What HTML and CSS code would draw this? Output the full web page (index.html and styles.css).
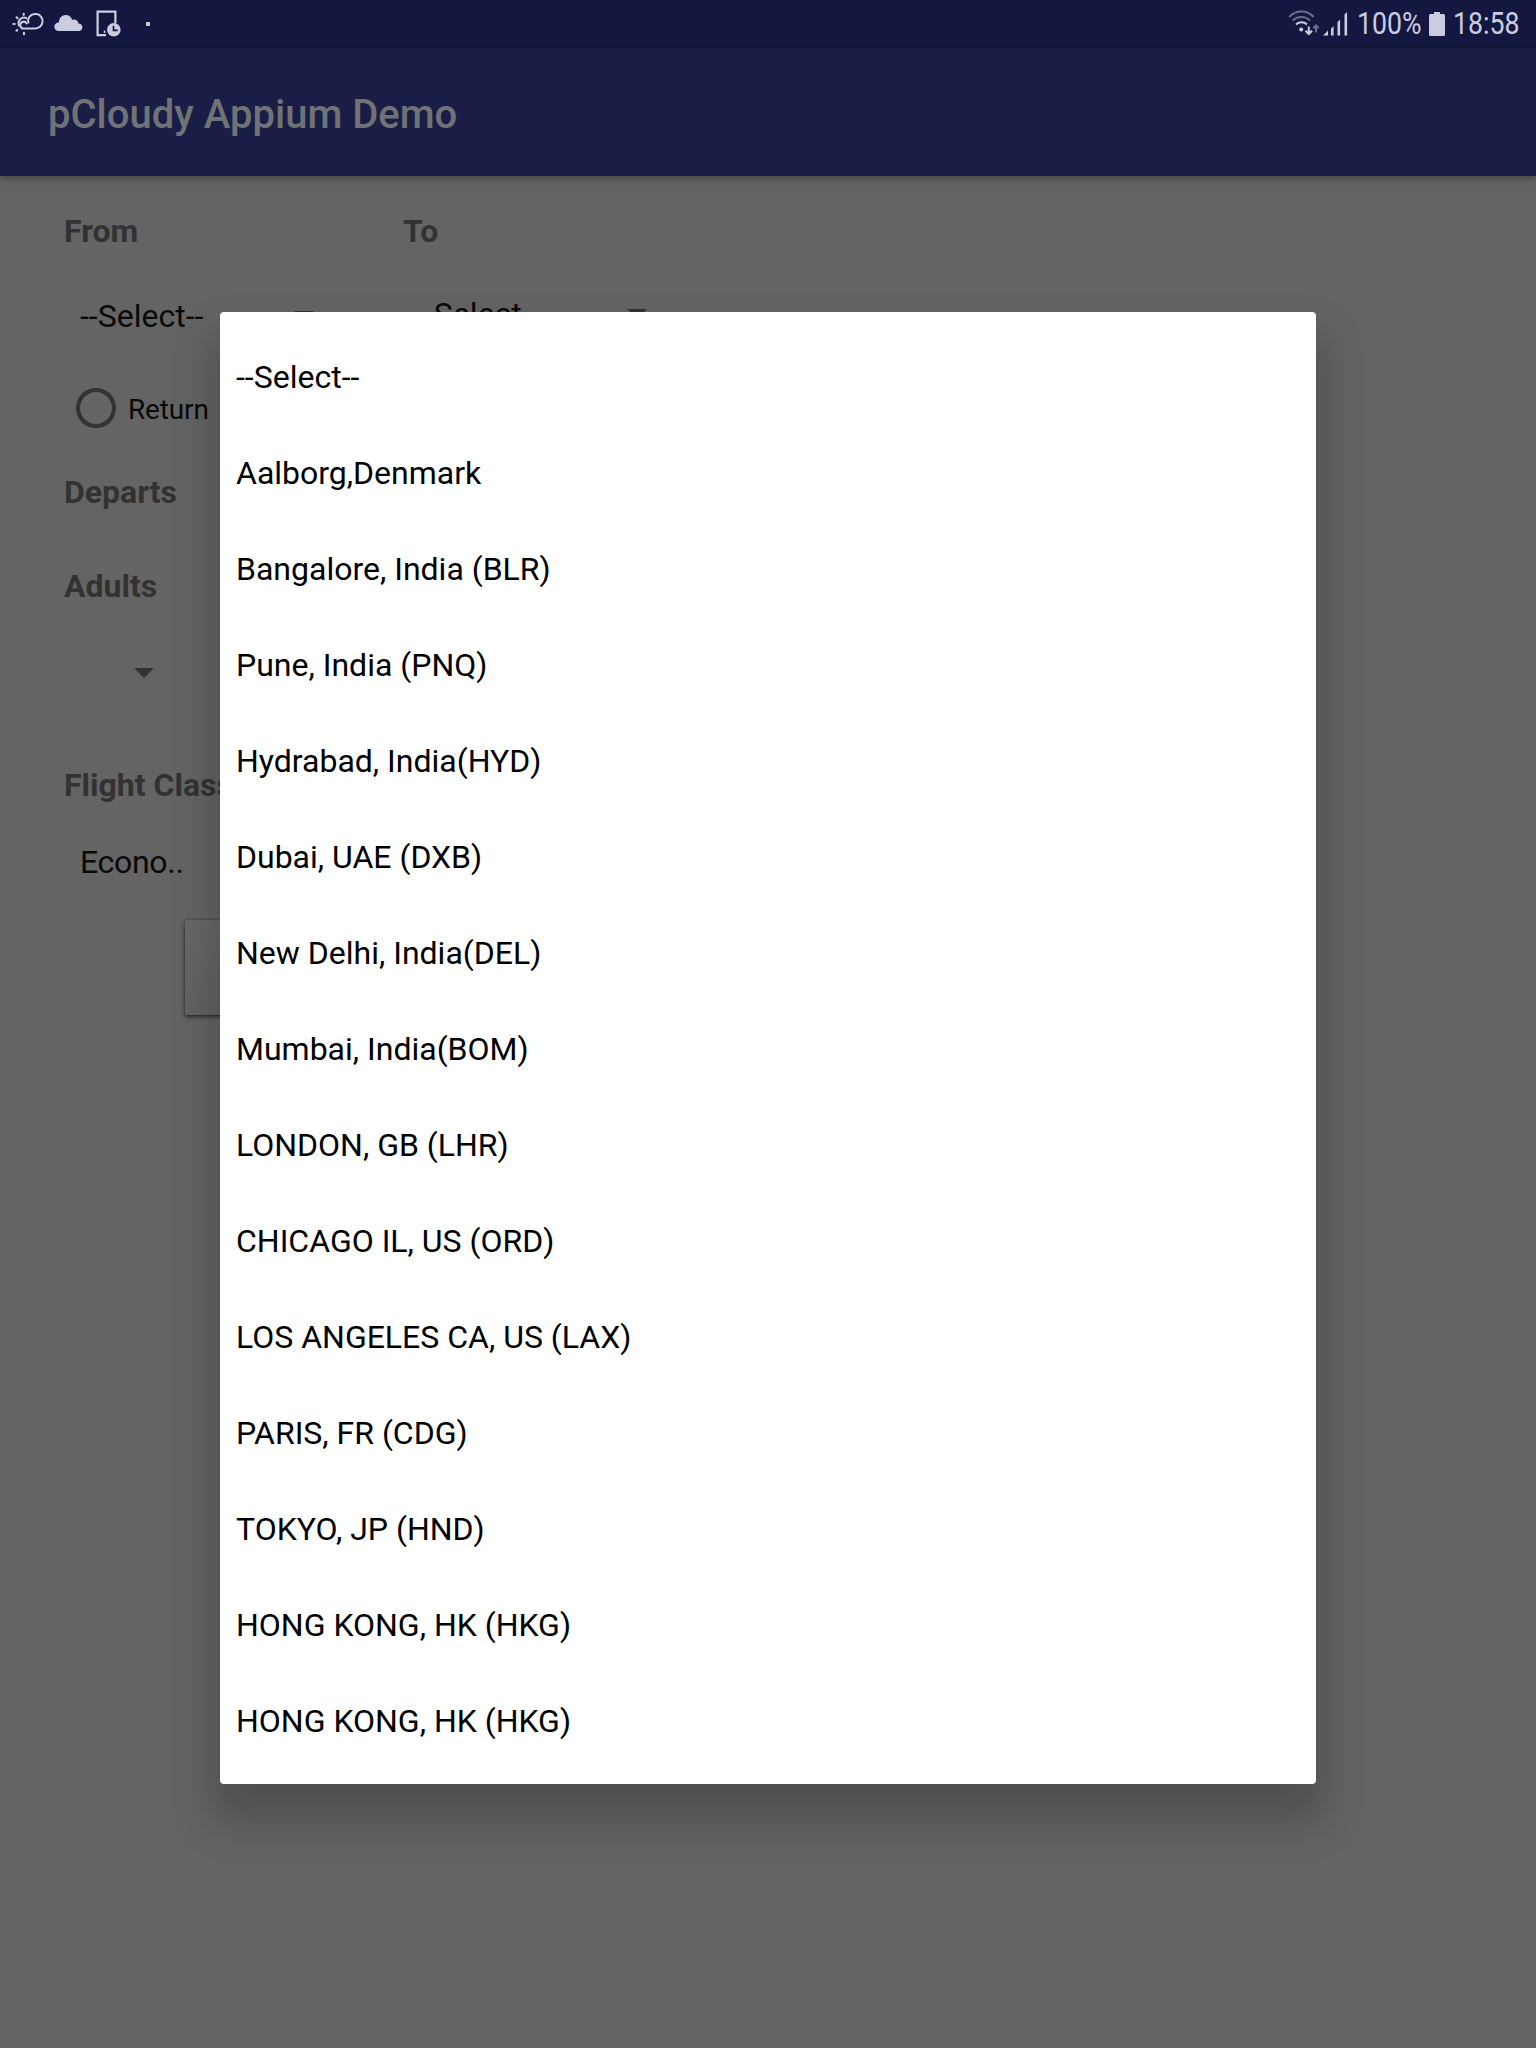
FILE: index.html
```html
<!DOCTYPE html>
<html lang="en">
<head>
<meta charset="utf-8">
<title>pCloudy Appium Demo</title>
<link rel="stylesheet" href="styles.css">
</head>
<body>
<div class="status-bar">
  <div class="notifications">
    <svg class="weather" width="32" height="26" viewBox="0 0 32 26" fill="none" stroke="currentColor" stroke-width="2" stroke-linecap="round">
      <path d="M14.6 13.400a3.400 3.400 0 1 0-2.600 5.100H23.300a7.300 7.300 0 1 0-7-9.500q-.6 1.800.2 3.500"/>
      <path d="M14.500 8.200A5.600 5.600 0 0 0 7 15.500"/>
      <path d="M4.600 7.300l.9.900M1.400 14h1.300M5.200 20l-.7.700M12 22.800v1.400M11.700 3.800v1" stroke-width="2.200"/>
    </svg>
    <svg class="cloud" width="29" height="18" viewBox="0 0 29 18" fill="currentColor">
      <path d="M5 17C2 17 .3 15 .3 12.7c0-2.500 2-4.300 4.500-4.300C5.200 4 8 1 11.500 1c3.200 0 5.800 1.900 6.700 4.900.5-.2 1-.3 1.600-.3 2.700 0 4.400 1.700 4.600 3.900 2.300.1 4 1.600 4 3.800 0 2.100-1.600 3.700-3.900 3.700z"/>
    </svg>
    <svg class="device" width="26" height="28" viewBox="0 0 26 28">
      <path d="M10 25.200H1.600V1.600h17.800V13" fill="none" stroke="currentColor" stroke-width="2.200"/>
      <path d="M8.500 20.500v2.500" stroke="currentColor" stroke-width="1.500"/>
      <circle cx="17.800" cy="19.800" r="6.800" fill="currentColor"/>
      <path d="M17.500 15.800v4.500h4.200" fill="none" stroke="#141840" stroke-width="1.700"/>
    </svg>
    <span class="more-dot"></span>
  </div>
  <div class="system">
    <svg class="wifi" width="33" height="26" viewBox="0 0 33 26" fill="none" stroke="currentColor" stroke-width="2">
      <path d="M1.200 7a16.500 16.500 0 0 1 24.500 0M4.700 10.600a12 12 0 0 1 17.300 0" opacity=".48"/>
      <path d="M8 14.500a8 8 0 0 1 11 0"/>
      <circle cx="13.200" cy="19.500" r="2" fill="currentColor" stroke="none"/>
      <path d="M20.800 16.500v7.500M17.500 20.800l3.300 3.200 3.300-3.200"/>
      <path d="M28 22.500v-7M25.300 18.200l2.700-2.700 2.700 2.700" opacity=".48"/>
    </svg>
    <svg class="signal" width="25" height="25" viewBox="0 0 25 25" fill="currentColor">
      <path d="M0 24.500l5-5v5zM8 24.500v-7l2.600-2.300v9.300zM14.500 24.500V11.200L17.100 8.600v15.900zM21.500 24.500V3.500L24.100.9v23.600z"/>
    </svg>
    <span class="percent">100%</span>
    <svg class="battery" width="16" height="24" viewBox="0 0 16 24" fill="currentColor">
      <path d="M5 0h6v2h3.500Q16 2 16 3.500v19q0 1.500-1.500 1.500h-13Q0 24 0 22.500v-19Q0 2 1.500 2H5z"/>
    </svg>
    <span class="clock">18:58</span>
  </div>
</div>
<header class="app-bar"><h1>pCloudy Appium Demo</h1></header>
<main class="form">
  <div class="route">
    <div class="field from">
      <span class="label">From</span>
      <div class="spinner"><span>--Select--</span><i class="caret"></i></div>
    </div>
    <div class="field to">
      <span class="label">To</span>
      <div class="spinner"><span>--Select--</span><i class="caret"></i></div>
    </div>
  </div>
  <div class="return"><i class="radio"></i><span>Return</span></div>
  <span class="label departs">Departs</span>
  <span class="label adults">Adults</span>
  <i class="caret adults-caret"></i>
  <span class="label flight">Flight Class</span>
  <span class="class-value">Econo..</span>
  <div class="search-button"></div>
</main>
<ul class="popup">
  <li>--Select--</li>
  <li>Aalborg,Denmark</li>
  <li>Bangalore, India (BLR)</li>
  <li>Pune, India (PNQ)</li>
  <li>Hydrabad, India(HYD)</li>
  <li>Dubai, UAE (DXB)</li>
  <li>New Delhi, India(DEL)</li>
  <li>Mumbai, India(BOM)</li>
  <li>LONDON, GB (LHR)</li>
  <li>CHICAGO IL, US (ORD)</li>
  <li>LOS ANGELES CA, US (LAX)</li>
  <li>PARIS, FR (CDG)</li>
  <li>TOKYO, JP (HND)</li>
  <li>HONG KONG, HK (HKG)</li>
  <li>HONG KONG, HK (HKG)</li>
</ul>
</body>
</html>
```
FILE: styles.css
```css
* { box-sizing: border-box; }
body {
  margin: 0;
  height: 2048px;
  position: relative;
  overflow: hidden;
  display: flex;
  flex-direction: column;
  background: #646464;
  color: #0a0a0a;
  font: 32px/38px Roboto, sans-serif;
}
.status-bar {
  height: 48px;
  flex: none;
  display: flex;
  justify-content: space-between;
  background: #141840;
  color: #cccce0;
}
.notifications, .system { display: flex; align-items: flex-start; }
.weather { margin: 10px 0 0 12px; }
.cloud { margin: 14px 0 0 10px; }
.device { margin: 10px 0 0 13px; }
.more-dot { width: 4px; height: 4px; margin: 22px 0 0 24px; border-radius: 1px; background: currentColor; }
.system { padding-right: 16px; font-size: 31px; line-height: 36px; }
.wifi { margin: 10px 2px 0 0; }
.signal { margin: 11px 9px 0 0; }
.battery { margin: 12px 8px 0 0; }
.percent, .clock { margin-top: 6px; white-space: nowrap; transform: scaleX(.86); transform-origin: left center; }
.percent { width: 64px; margin-right: 8px; }
.clock { width: 67px; }
.app-bar {
  height: 128px;
  flex: none;
  display: flex;
  align-items: center;
  padding: 6px 48px 0;
  background: #1a1e46;
  box-shadow: 0 2px 8px rgba(0, 0, 0, .35);
}
h1 { margin: 0; color: #707376; font-size: 40px; line-height: 48px; font-weight: 500; }
.form { display: flex; flex-direction: column; align-items: flex-start; padding: 36px 64px 0; }
.route { display: flex; height: 123px; }
.field { display: flex; flex-direction: column; }
.from { width: 339px; }
.to { width: 260px; }
.label { color: #323232; font-weight: 700; }
.spinner { display: flex; align-items: flex-start; justify-content: space-between; margin-top: 47px; padding-left: 16px; }
.from .spinner { padding-right: 89px; }
.to .spinner { margin-top: 45px; padding: 0 16px 0 13px; }
.caret { width: 20px; height: 10px; background: #323232; clip-path: polygon(0 0, 100% 0, 50% 100%); }
.spinner .caret { margin-top: 14px; }
.return { display: flex; align-items: flex-start; gap: 12px; margin: 53px 0 0 12px; font-size: 28px; line-height: 33px; letter-spacing: -.15px; }
.return span { margin-top: 5px; }
.radio { width: 40px; height: 40px; border: 4px solid #323232; border-radius: 50%; }
.departs { margin-top: 45px; }
.adults { margin-top: 56px; }
.adults-caret { margin: 63px 0 0 70px; }
.flight { margin-top: 88px; }
.class-value { margin: 39px 0 0 16px; letter-spacing: -.3px; }
.search-button {
  width: 400px;
  height: 95px;
  margin: 39px 0 0 121px;
  border-radius: 2px;
  background: linear-gradient(#686868, #626262);
  box-shadow: 0 2px 4px rgba(0, 0, 0, .55), 0 0 2px rgba(0, 0, 0, .4);
}
.popup {
  position: absolute;
  left: 220px;
  top: 312px;
  width: 1096px;
  margin: 0;
  padding: 17px 0 15px;
  list-style: none;
  background: #fff;
  border-radius: 4px;
  color: #000;
  box-shadow: 0 30px 40px 10px rgba(0, 0, 0, .2);
}
.popup li { height: 96px; display: flex; align-items: center; padding: 0 16px; }
```
